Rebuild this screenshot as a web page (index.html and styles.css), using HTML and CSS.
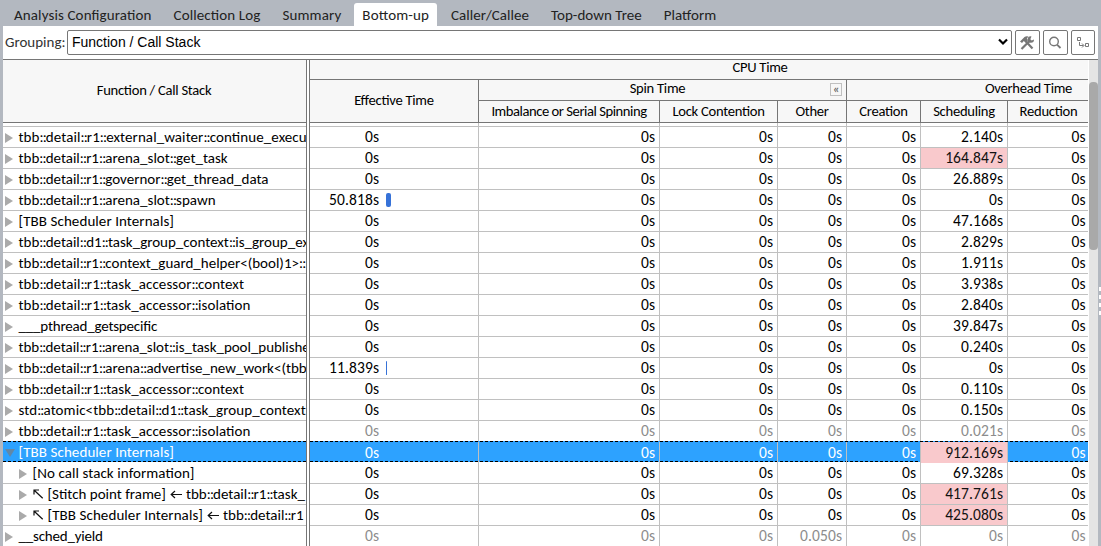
FILE: index.html
```
<!DOCTYPE html>
<html lang="en">
<head>
<meta charset="utf-8">
<title>Bottom-up</title>
<link rel="stylesheet" href="styles.css">
</head>
<body>
<nav class="tabs">
<span class="tab">Analysis Configuration</span><span class="tab">Collection Log</span><span class="tab">Summary</span><span class="tab active">Bottom-up</span><span class="tab">Caller/Callee</span><span class="tab">Top-down Tree</span><span class="tab">Platform</span>
</nav>
<main class="panel">
<div class="toolbar">
<span class="label">Grouping:</span>
<div class="select"><span>Function / Call Stack</span><svg width="10" height="8" viewBox="0 0 10 8"><path d="M1 1.500 5 5.500 9 1.500" fill="none" stroke="#000" stroke-width="2.200"/></svg></div>
<button class="tool"><svg width="16" height="16" viewBox="0 0 16 16"><path d="M1 6.500 5.500 2Q7 1 9.500 1.500L7.800 3.600 9 5.200 6.500 7.600 4.800 6 3 8Z" fill="#777"/><path d="M6.500 6 13.500 13.500M2.500 14 11 5.500" stroke="#777" stroke-width="2.200"/><path d="M12.500 1.500A3.200 3.200 0 1 0 15 4.600L12.700 5.500 11.300 4.200Z" fill="#777"/></svg></button>
<button class="tool"><svg width="16" height="16" viewBox="0 0 16 16"><circle cx="7" cy="6.500" r="4.300" fill="none" stroke="#777" stroke-width="1.400"/><path d="M10 9.600 13.500 13" stroke="#777" stroke-width="1.800"/></svg></button>
<button class="tool"><svg width="16" height="16" viewBox="0 0 16 16"><path d="M2.500 2.500h3v3h-3zM10.500 8.500h3v3h-3zM4.500 7v3.500h4M7 8.500l2 2L7 12.500" fill="none" stroke="#777"/></svg></button>
</div>
<div class="grid">
<section class="names">
<div class="names-head">Function / Call Stack</div>
<div class="gap-row"></div>
<div class="row"><i class="tri"></i><span class="wide">tbb<s>::</s>detail<s>::</s>r1<s>::</s>external_waiter<s>::</s>continue_execu</span></div>
<div class="row"><i class="tri"></i><span>tbb<s>::</s>detail<s>::</s>r1<s>::</s>arena_slot<s>::</s>get_task</span></div>
<div class="row"><i class="tri"></i><span>tbb<s>::</s>detail<s>::</s>r1<s>::</s>governor<s>::</s>get_thread_data</span></div>
<div class="row"><i class="tri"></i><span>tbb<s>::</s>detail<s>::</s>r1<s>::</s>arena_slot<s>::</s>spawn</span></div>
<div class="row"><i class="tri"></i><span class="wide">[TBB Scheduler Internals]</span></div>
<div class="row"><i class="tri"></i><span>tbb<s>::</s>detail<s>::</s>d1<s>::</s>task_group_context<s>::</s>is_group_ex</span></div>
<div class="row"><i class="tri"></i><span>tbb<s>::</s>detail<s>::</s>r1<s>::</s>context_guard_helper&lt;(bool)1&gt;<s>::</s></span></div>
<div class="row"><i class="tri"></i><span class="wide">tbb<s>::</s>detail<s>::</s>r1<s>::</s>task_accessor<s>::</s>context</span></div>
<div class="row"><i class="tri"></i><span class="wide">tbb<s>::</s>detail<s>::</s>r1<s>::</s>task_accessor<s>::</s>isolation</span></div>
<div class="row"><i class="tri"></i><span class="tight">___pthread_getspecific</span></div>
<div class="row"><i class="tri"></i><span class="snug">tbb<s>::</s>detail<s>::</s>r1<s>::</s>arena_slot<s>::</s>is_task_pool_publishe</span></div>
<div class="row"><i class="tri"></i><span>tbb<s>::</s>detail<s>::</s>r1<s>::</s>arena<s>::</s>advertise_new_work&lt;(tbb</span></div>
<div class="row"><i class="tri"></i><span class="wide">tbb<s>::</s>detail<s>::</s>r1<s>::</s>task_accessor<s>::</s>context</span></div>
<div class="row"><i class="tri"></i><span class="wide">std<s>::</s>atomic&lt;tbb<s>::</s>detail<s>::</s>d1<s>::</s>task_group_context</span></div>
<div class="row"><i class="tri"></i><span class="wide">tbb<s>::</s>detail<s>::</s>r1<s>::</s>task_accessor<s>::</s>isolation</span></div>
<div class="row selected"><i class="tri open"></i><span class="wide">[TBB Scheduler Internals]</span></div>
<div class="row child"><i class="tri"></i><span class="wide">[No call stack information]</span></div>
<div class="row child"><i class="tri"></i><svg class="nw" width="11" height="10" viewBox="0 0 11 10"><path d="M1 5.500V1h5M1.200 1.200l8.500 8" fill="none" stroke="#111" stroke-width="1.200"/></svg><span>[Stitch point frame]</span><svg class="left" width="12" height="9" viewBox="0 0 12 9"><path d="M5 1 1.200 4.500 5 8M1.200 4.500H12" fill="none" stroke="#111" stroke-width="1.200"/></svg><span>tbb<s>::</s>detail<s>::</s>r1<s>::</s>task_</span></div>
<div class="row child"><i class="tri"></i><svg class="nw" width="11" height="10" viewBox="0 0 11 10"><path d="M1 5.500V1h5M1.200 1.200l8.500 8" fill="none" stroke="#111" stroke-width="1.200"/></svg><span class="wide">[TBB Scheduler Internals]</span><svg class="left" width="12" height="9" viewBox="0 0 12 9"><path d="M5 1 1.200 4.500 5 8M1.200 4.500H12" fill="none" stroke="#111" stroke-width="1.200"/></svg><span>tbb<s>::</s>detail<s>::</s>r1</span></div>
<div class="row"><i class="tri"></i><span class="tight">__sched_yield</span></div>
</section>
<section class="data">
<div class="data-head">
<div class="h cpu">CPU Time</div>
<div class="h eff">Effective Time</div>
<div class="h spin">Spin Time<span class="collapse">«</span></div>
<div class="h over">Overhead Time</div>
<div class="h imbalance">Imbalance or Serial Spinning</div><div class="h">Lock Contention</div><div class="h">Other</div><div class="h">Creation</div><div class="h">Scheduling</div><div class="h last">Reduction</div>
</div>
<div class="cells gap-row"><b></b><b></b><b></b><b></b><b></b><b></b><b></b></div>
<div class="cells"><b>0s</b><b>0s</b><b>0s</b><b>0s</b><b>0s</b><b>2.140s</b><b>0s</b></div>
<div class="cells"><b>0s</b><b>0s</b><b>0s</b><b>0s</b><b>0s</b><b class="hot">164.847s</b><b>0s</b></div>
<div class="cells"><b>0s</b><b>0s</b><b>0s</b><b>0s</b><b>0s</b><b>26.889s</b><b>0s</b></div>
<div class="cells"><b>50.818s<i class="bar" style="width:5px"></i></b><b>0s</b><b>0s</b><b>0s</b><b>0s</b><b>0s</b><b>0s</b></div>
<div class="cells"><b>0s</b><b>0s</b><b>0s</b><b>0s</b><b>0s</b><b>47.168s</b><b>0s</b></div>
<div class="cells"><b>0s</b><b>0s</b><b>0s</b><b>0s</b><b>0s</b><b>2.829s</b><b>0s</b></div>
<div class="cells"><b>0s</b><b>0s</b><b>0s</b><b>0s</b><b>0s</b><b>1.911s</b><b>0s</b></div>
<div class="cells"><b>0s</b><b>0s</b><b>0s</b><b>0s</b><b>0s</b><b>3.938s</b><b>0s</b></div>
<div class="cells"><b>0s</b><b>0s</b><b>0s</b><b>0s</b><b>0s</b><b>2.840s</b><b>0s</b></div>
<div class="cells"><b>0s</b><b>0s</b><b>0s</b><b>0s</b><b>0s</b><b>39.847s</b><b>0s</b></div>
<div class="cells"><b>0s</b><b>0s</b><b>0s</b><b>0s</b><b>0s</b><b>0.240s</b><b>0s</b></div>
<div class="cells"><b>11.839s<i class="bar" style="width:1px"></i></b><b>0s</b><b>0s</b><b>0s</b><b>0s</b><b>0s</b><b>0s</b></div>
<div class="cells"><b>0s</b><b>0s</b><b>0s</b><b>0s</b><b>0s</b><b>0.110s</b><b>0s</b></div>
<div class="cells"><b>0s</b><b>0s</b><b>0s</b><b>0s</b><b>0s</b><b>0.150s</b><b>0s</b></div>
<div class="cells dim"><b>0s</b><b>0s</b><b>0s</b><b>0s</b><b>0s</b><b>0.021s</b><b>0s</b></div>
<div class="cells selected"><b>0s</b><b>0s</b><b>0s</b><b>0s</b><b>0s</b><b class="hot">912.169s</b><b>0s</b></div>
<div class="cells"><b>0s</b><b>0s</b><b>0s</b><b>0s</b><b>0s</b><b>69.328s</b><b>0s</b></div>
<div class="cells"><b>0s</b><b>0s</b><b>0s</b><b>0s</b><b>0s</b><b class="hot">417.761s</b><b>0s</b></div>
<div class="cells"><b>0s</b><b>0s</b><b>0s</b><b>0s</b><b>0s</b><b class="hot">425.080s</b><b>0s</b></div>
<div class="cells dim"><b>0s</b><b>0s</b><b>0s</b><b>0.050s</b><b>0s</b><b>0s</b><b>0s</b></div>
</section>
<div class="scroll"><div class="thumb"></div></div>
</div>
</main>
<div class="splitter"><i></i><i></i><i></i><i></i></div>
</body>
</html>
```
FILE: styles.css
```
* { box-sizing: border-box; }
body {
  margin: 0;
  height: 546px;
  overflow: hidden;
  position: relative;
  background: #b3b8c0;
  color: #000;
  font: 15px/20px Carlito, Lato, sans-serif;
  font-feature-settings: "liga" 1;
}
.tabs { display: flex; height: 26px; padding: 3px 0 0 3px; color: #222; letter-spacing: 0.12px; }
.tab { padding: 2px 11px 0; height: 23px; white-space: nowrap; }
.tab.active { background: #fff; border-radius: 3px 3px 0 0; padding: 2px 8px 0; margin: 0 3px 0 2px; }
.tab.active ~ .tab { letter-spacing: 0.03px; }
.panel { margin: 0 3px; height: 520px; background: #fff; overflow: hidden; }
.toolbar { display: flex; height: 33px; padding: 4px 0 0 2px; }
.label { width: 62px; flex: none; line-height: 24px; color: #333; white-space: nowrap; }
.select {
  width: 945px;
  flex: none;
  height: 25px;
  border: 1px solid #767676;
  border-radius: 2px;
  display: flex;
  justify-content: space-between;
  align-items: center;
  padding: 0 3px 1px 4px;
  color: #000;
  font: 14px/22px "Liberation Sans", sans-serif;
}
.tool {
  width: 25px;
  flex: none;
  height: 25px;
  margin-left: 3px;
  padding: 0 1px 0 0;
  border: 1px solid #767676;
  border-radius: 2px;
  background: #fff;
  display: flex;
  align-items: center;
  justify-content: center;
}
.tool:last-child { width: 24px; }
.grid { display: flex; border-top: 1px solid #767676; height: 487px; }
.names { width: 304px; flex: none; border-right: 1px solid #767676; overflow: hidden; }
.data { width: 779px; margin: 0 1px 0 2px; border-left: 1px solid #767676; overflow: hidden; flex: none; }
.names-head {
  height: 63px;
  background: #f7f7f7;
  border-bottom: 1px solid #767676;
  line-height: 60px;
  text-align: center;
  padding-right: 1px;
  font-size: 14.6px;
  letter-spacing: -0.27px;
}
.gap-row { height: 4px !important; border-bottom: 1px solid #c0c0c0; }
.row {
  display: flex;
  align-items: center;
  height: 21px;
  line-height: 20px;
  border-bottom: 1px solid #c0c0c0;
  white-space: pre;
  padding-left: 2px;
}
.row.child { padding-left: 16px; }
.row s { text-decoration: none; letter-spacing: -0.85px; }
.wide { letter-spacing: 0.08px; }
.snug { letter-spacing: -0.04px; }
.tight { letter-spacing: -0.2px; }
.tri {
  width: 8px;
  height: 10px;
  margin: 2px 5.5px 0 0;
  background: #aaa;
  clip-path: polygon(0 0, 100% 50%, 0 100%);
  flex: none;
}
.tri.open { width: 10px; height: 8px; margin-right: 3.5px; background: #6288a8; clip-path: polygon(0 0, 100% 0, 50% 100%); }
.row svg { flex: none; }
.nw { margin-right: 4px; }
.left { margin: 0 4px; }
.data-head {
  display: grid;
  grid-template-columns: 169px 181px 118px 69px 74px 87px 81px;
  grid-template-rows: 20px 21px 22px;
  background: #f7f7f7;
  font-size: 14.6px;
  letter-spacing: -0.27px;
}
.h {
  border-right: 1px solid #767676;
  border-bottom: 1px solid #767676;
  display: flex;
  align-items: center;
  justify-content: center;
  white-space: nowrap;
  line-height: 17px;
  position: relative;
}
.imbalance { letter-spacing: -0.45px; }
.cpu { grid-column: 1 / 8; border-right: 0; padding-left: 121px; padding-bottom: 4px; }
.eff { grid-row: 2 / 4; padding-bottom: 2px; }
.spin { grid-column: 2 / 5; padding-right: 10px; padding-bottom: 4px; }
.over { grid-column: 5 / 8; border-right: 0; padding-left: 121px; padding-bottom: 4px; }
.last { border-right: 0; }
.collapse {
  position: absolute;
  right: 4px;
  top: 3px;
  width: 12px;
  height: 13px;
  border: 1px solid #c0c0c0;
  font-size: 13px;
  line-height: 9px;
  text-align: center;
  color: #555;
}
.cells {
  display: grid;
  grid-template-columns: 169px 181px 118px 69px 74px 87px 80px;
  height: 21px;
  border-bottom: 1px solid #c0c0c0;
  line-height: 20px;
  font-size: 15.5px;
  letter-spacing: 0.12px;
}
.cells b { border-right: 1px solid #c0c0c0; font-weight: 400; text-align: right; padding-right: 3.8px; position: relative; }
.cells b:last-child { border-right: 0; padding-right: 2.4px; }
.cells b:first-child { padding-right: 98.8px; }
.cells .hot { background: #f9c9cc; color: #111; }
.cells.dim { color: #8c8c8c; }
.bar { position: absolute; left: 76px; top: 3px; height: 14px; background: #3672d8; border-radius: 2px; }
.selected {
  position: relative;
  height: 21px;
  margin: -1px 0 1px;
  background: #2da2ff;
  color: #fff;
  line-height: 21px;
  border-top: 1px dashed #000;
  border-bottom: 1px dashed #000;
}
.row.selected { padding-top: 1px; }
.scroll { width: 9px; flex: none; background: #e4e4e4; padding-top: 22px; }
.thumb { height: 168px; background: #a9a9a9; border-radius: 4px; }
.splitter { position: absolute; right: 0; top: 287px; width: 2px; display: grid; gap: 4px; }
.splitter i { height: 4px; background: #fff; }
```
